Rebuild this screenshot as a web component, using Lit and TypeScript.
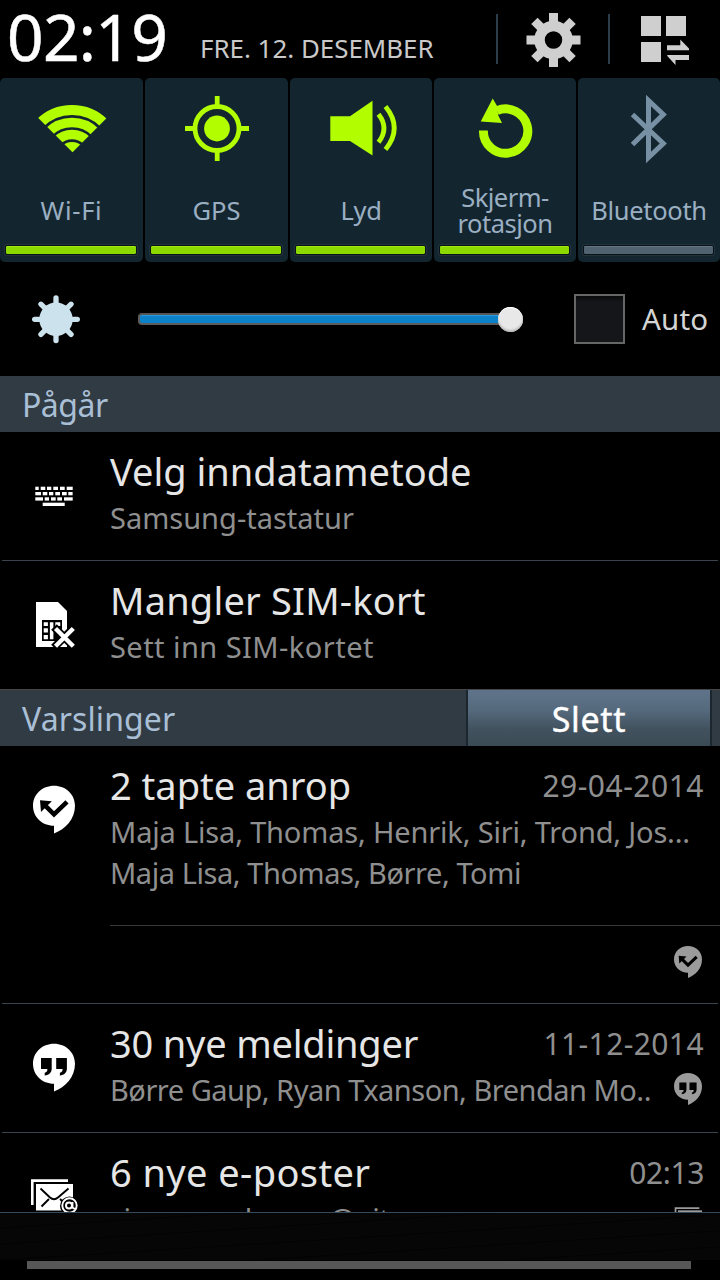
import { LitElement, html, svg, css, nothing } from "lit";
import { customElement, property } from "lit/decorators.js";

const bubble = svg`<path d="M54 39.7c-11.800 0-21 8.700-21 20s9.200 20 21 20v7.800c11.500-4.500 21-14.500 21-27.800 0-11.300-9.200-20-21-20z" fill="currentColor"/>`;

const glyphs: Record<string, unknown> = {
  keyboard: svg`<g fill="#fff">
    ${[
      [54.7, [[35.3, 3.4], [40.7, 4.600], [47, 4.300], [53.3, 4.700], [60, 4.700], [66.700, 6]]],
      [60, [[35.3, 5.700], [42.7, 4.600], [49, 4.300], [55.3, 4.700], [62, 4.700], [68.3, 4.300]]],
      [65.3, [[35.3, 7.700], [44.7, 4.300], [51, 4.700], [57.3, 4.700], [64, 8.700]]],
      [70.7, [[42.7, 22]]],
    ].map(([y, keys]: any) => keys.map(([x, w]: number[]) => svg`<rect x=${x} y=${y} width=${w} height="3.300"/>`))}
  </g>`,
  sim: svg`<path d="M36 41h22l9 9v36H36z" fill="#fff"/>
    <rect x="42" y="59" width="20" height="21" fill="#000"/>
    <path d="M43.700 61.300h4.200v3.700h-4.200zM43.700 67.200h4.200v4.400h-4.200zM43.700 74h4.200v4.200h-4.200zM49.900 61.300h3.500v16.900h-3.500zM55.300 61.300h5v3.700h-5zM55.300 67.200h5v4.400h-5z" fill="#fff"/>
    <path d="M54 66 74.500 86.500M74.500 66 54 86.500" stroke="#000" stroke-width="8"/>
    <path d="M55.500 67.500 73.300 85.300M73.300 67.500 55.500 85.300" stroke="#fff" stroke-width="4.400"/>`,
  missed: svg`${bubble}
    <path d="M67 55.800 54 68.300 44.500 58.800" fill="none" stroke="#000" stroke-width="4.600"/>
    <path d="M40 54.300 51.800 55.300 41 66z" fill="#000"/>`,
  quotes: svg`${bubble}
    <path d="M41 54h10.700v10.500c0 4-2.400 6.600-7 6.900v-2.700c2-.4 2.700-1.600 2.700-3.700H41zM56.200 54h10.700v10.500c0 4-2.400 6.600-7 6.900v-2.700c2-.4 2.700-1.600 2.700-3.700h-6.400z" fill="#000"/>`,
  mail: svg`<path d="M32.300 72V47.600H68" fill="none" stroke="currentColor" stroke-width="2.600"/>
    <rect x="36" y="51" width="37" height="26.500" fill="currentColor"/>
    <path d="M40.500 55.500 50 64.500q4 3.500 8 0L68.500 55.500M41.500 73.500l7.500-7.500M60 66l3 3" fill="none" stroke="#000" stroke-width="1.900"/>
    <circle cx="69.500" cy="73" r="9.500" fill="#000"/>
    <circle cx="69.500" cy="72.500" r="7.200" fill="none" stroke="currentColor" stroke-width="1.900"/>
    <circle cx="69" cy="72.500" r="3" fill="none" stroke="currentColor" stroke-width="2"/>
    <path d="M72.500 69v5q.500 2 3 1.500" fill="none" stroke="currentColor" stroke-width="1.900"/>`,
};

const toggles = [
  {
    label: ["Wi-Fi"], on: true, gap: 0.7,
    icon: svg`<clipPath id="fan"><path d="M72.500 74.300 28 29.800V10h88v20.800z"/></clipPath>
      <g clip-path="url(#fan)" fill="none" stroke="#b2fe00">
        <circle cx="72" cy="78" r="46" stroke-width="10"/><circle cx="72" cy="78" r="33.500" stroke-width="9.600"/>
        <circle cx="72" cy="78" r="21.500" stroke-width="9.600"/><circle cx="72" cy="78" r="14" fill="#b2fe00" stroke="none"/></g>`,
  },
  {
    label: ["GPS"], on: true, gap: 0,
    icon: svg`<g fill="none" stroke="#b2fe00" stroke-width="4.800"><circle cx="72" cy="50.500" r="22"/>
      <path d="M40 50.500h9M95 50.500h9M72.200 18v9M72.200 74v9"/></g><circle cx="72" cy="50.500" r="12.900" fill="#b2fe00"/>`,
  },
  {
    label: ["Lyd"], on: true, gap: -0.4,
    icon: svg`<path d="M40.300 38.200H60L82.500 22.700v54.700L60 63H40.300z" fill="#b2fe00"/>
      <g fill="none" stroke="#b2fe00" stroke-width="4.800"><path d="M88.500 36.200q11 14 0 28M95.500 28.500q17.500 21.500 0 43"/></g>`,
  },
  {
    label: ["Skjerm-", "rotasjon"], on: true, gap: -0.5,
    icon: svg`<path d="M49.400 52.500A22.200 22.200 0 1 0 63 32.600" fill="none" stroke="#b2fe00" stroke-width="8.900"/>
      <path d="M58.700 20.500 46.700 43.400 68 45l-3.700-7.500-1.500-10z" fill="#b2fe00"/>`,
  },
  {
    label: ["Bluetooth"], on: false, gap: -0.3,
    icon: svg`<path d="M54.500 66.500 85.300 36.500 70.500 22.500V79.500L85.300 65.500 54.500 36.500" fill="none" stroke="#7890a3" stroke-width="5" stroke-miterlimit="10"/>`,
  },
];

interface Line { text: string; gap: number; }
interface Note {
  icon: string; title: Line; lines: Line[]; time?: Line; small?: string; count?: string; footer?: boolean;
}

const ongoing: Note[] = [
  { icon: "keyboard", title: { text: "Velg inndatametode", gap: 0 }, lines: [{ text: "Samsung-tastatur", gap: 0 }] },
  { icon: "sim", title: { text: "Mangler SIM-kort", gap: 0.2 }, lines: [{ text: "Sett inn SIM-kortet", gap: 0.45 }] },
];

const notices: Note[] = [
  {
    icon: "missed", title: { text: "2 tapte anrop", gap: 0 }, time: { text: "29-04-2014", gap: 0.5 }, footer: true,
    lines: [
      { text: "Maja Lisa, Thomas, Henrik, Siri, Trond, Jos...", gap: -0.17 },
      { text: "Maja Lisa, Thomas, Børre, Tomi", gap: -0.43 },
    ],
  },
  {
    icon: "quotes", title: { text: "30 nye meldinger", gap: -0.2 }, time: { text: "11-12-2014", gap: 0.4 }, small: "quotes",
    lines: [{ text: "Børre Gaup, Ryan Txanson, Brendan Mo..", gap: -0.5 }],
  },
  {
    icon: "mail", title: { text: "6 nye e-poster", gap: 0.4 }, time: { text: "02:13", gap: -0.4 }, small: "mail", count: "6",
    lines: [{ text: "sjur.n.moshagen@uit.no", gap: -0.4 }],
  },
];

@customElement("quick-toggle")
class QuickToggle extends LitElement {
  @property({ attribute: false }) item: any;
  static styles = css`
    :host { display: flex; flex-direction: column; height: 184px; background: #132630; border-radius: 5px; overflow: hidden; }
    svg { display: block; width: 144px; height: 106px; flex: none; }
    .label { height: 52px; display: flex; flex-direction: column; justify-content: center; text-align: center;
      font-size: 25.500px; line-height: 26px; color: #9bafc2; white-space: nowrap; }
    .bar { height: 8px; margin: 10px 7px 0 6px; background: #8cd900; outline: 1px solid #081218; box-shadow: inset 0 1px #a0ea10, 0 0 0 2px #22323b; border-radius: 1px; }
    .off { background: #50626f; box-shadow: inset 0 1px #657682, 0 0 0 2px #22323b; }
  `;
  render() {
    return html`<svg viewBox="0 0 144 106">${this.item.icon}</svg>
      <div class="label" style="letter-spacing:${this.item.gap}px">${this.item.label.map((t: string) => html`<span>${t}</span>`)}</div>
      <div class="bar ${this.item.on ? "" : "off"}"></div>`;
  }
}

@customElement("notice-row")
class NoticeRow extends LitElement {
  @property({ attribute: false }) note!: Note;
  static styles = css`
    :host { display: block; flex: none; }
    .row { display: flex; height: 128px; }
    .tall { height: 179px; }
    .icon { width: 110px; height: 128px; flex: none; color: #fff; }
    .body { flex: 1; min-width: 0; padding-top: 14px; }
    .head { display: flex; justify-content: space-between; height: 50px; padding-right: 16px; }
    .title { font-size: 38px; line-height: 50px; color: #e6e6e6; white-space: pre; }
    .time { font-size: 30px; line-height: 51px; color: #8f8f8f; }
    .sub { display: flex; justify-content: space-between; padding: 1px 18px 0 0; }
    .line { font-size: 29px; line-height: 41px; color: #8f8f8f; white-space: pre; }
    .aside { display: flex; color: #9b9b9b; gap: 16px; }
    .count { font-size: 25px; line-height: 48px; }
    .small { width: 28px; height: 32px; margin-top: 4px; }
    .small-mail { margin-top: 9px; }
    .footer { height: 78px; margin-left: 110px; border-top: 1px solid #383838; display: flex; justify-content: flex-end;
      padding-right: 18px; box-sizing: border-box; color: #9b9b9b; }
    .footer .small { margin-top: 20px; }
    .rule { height: 1px; margin: 0 2px; background: #3a4350; }
  `;
  render() {
    const n = this.note;
    const line = (l: Line, name: string) => html`<div class=${name} style="letter-spacing:${l.gap}px">${l.text}</div>`;
    return html`
      <div class="row ${n.footer ? "tall" : ""}">
        <svg class="icon" viewBox="0 0 110 128">${glyphs[n.icon]}</svg>
        <div class="body">
          <div class="head">${line(n.title, "title")}${n.time ? line(n.time, "time") : nothing}</div>
          <div class="sub">
            <div>${n.lines.map((l) => line(l, "line"))}</div>
            ${n.small
              ? html`<div class="aside">${n.count ? html`<span class="count">${n.count}</span>` : nothing}
                  ${n.small === "mail"
                    ? html`<svg class="small small-mail" viewBox="30 46 42 48">${glyphs.mail}</svg>`
                    : html`<svg class="small" viewBox="33 39.600 42 48">${glyphs[n.small]}</svg>`}</div>`
              : nothing}
          </div>
        </div>
      </div>
      ${n.footer ? html`<div class="footer"><svg class="small" viewBox="33 39.600 42 48">${glyphs.missed}</svg></div>` : nothing}
      <div class="rule"></div>`;
  }
}

@customElement("app-root")
class AppRoot extends LitElement {
  static styles = css`
    :host { display: flex; flex-direction: column; width: 720px; height: 1280px; overflow: hidden; background: #000;
      font-family: "Noto Sans", sans-serif; }
    .top { display: flex; height: 78px; flex: none; align-items: flex-start; }
    .clock { width: 193px; padding-left: 7px; font-size: 64px; line-height: 74px; letter-spacing: -.700px; color: #fff; -webkit-text-stroke: .500px #fff; white-space: nowrap; }
    .date { width: 290px; margin-top: 28px; font-size: 25.900px; line-height: 40px; color: #c9c9c9; white-space: nowrap; }
    .actions { width: 223px; height: 78px; flex: none; }
    .toggles { display: grid; grid-template-columns: 143px 143px 142px 142px 142px; gap: 2px; flex: none; }
    .brightness { height: 114px; display: flex; align-items: center; flex: none; }
    .sun { width: 138px; height: 114px; flex: none; }
    .slider { width: 386px; height: 26px; display: flex; align-items: center; flex: none; }
    .track { width: 366px; height: 8px; border: 2px solid #5c5c5c; border-right: 0; border-radius: 4px 0 0 4px; background: #0a81c8; border-top-color: #555; box-shadow: inset 0 1px #2b9ade; }
    .thumb { width: 25px; height: 25px; margin-left: -8px; border-radius: 50%; background: #e8e8e8; box-shadow: inset 0 -2px 2px #bbb, inset 0 1px #fff; flex: none; }
    .check { width: 47px; height: 46px; margin-left: 50px; border: 2px solid #666; background: linear-gradient(#08090a, #15161a 6px); flex: none; }
    .auto { margin-left: 17px; font-size: 29.500px; line-height: 40px; letter-spacing: .200px; color: #d4d4d4; }
    .section { display: flex; flex: none; height: 56px; background: #313b44; color: #a9bfd6; font-size: 32px; line-height: 56px; }
    .section span { padding-left: 22px; flex: 1; }
    .ongoing { letter-spacing: -.500px; line-height: 57px; }
    .notices { border-top: 1px solid #454545; margin-top: -1px; line-height: 58px; letter-spacing: .100px; }
    .clear { font: inherit; width: 246px; margin-right: 8px; padding: 0; border: 0; border-left: 2px solid #1c262e; border-right: 2px solid #1c262e;
      box-sizing: border-box; color: #fff; font-size: 34px; line-height: 58px; letter-spacing: .700px; -webkit-text-stroke: .400px #fff;
      background: linear-gradient(#5f738b, #566a7e 35%, #41525e 70%, #3b4b56); }
    .list { flex: 1; min-height: 0; overflow: hidden; display: flex; flex-direction: column; }
    .foot { height: 67px; flex: none; border-top: 1px solid #34495a; display: flex; flex-direction: column; }
    .grip { height: 47px; background: repeating-linear-gradient(176.400deg, #060606 0 14px, #020202 15px, #060606 16px); }
    .handle { height: 8px; margin: 1px 29px 0 27px; background: #575757; }
  `;
  render() {
    return html`
      <div class="top">
        <div class="clock">02:19</div>
        <div class="date">FRE. 12. DESEMBER</div>
        <svg class="actions" viewBox="0 0 223 78">
          <path d="M7 14v50M119 14v50" stroke="#2d3c4a" stroke-width="2"/>
          <g stroke="#cfcfcf"><circle cx="63.500" cy="40" r="14" fill="none" stroke-width="10.500"/>
            ${[0, 45, 90, 135].map((a) => svg`<path d="M63.500 13v12M63.500 55v12" stroke-width="9" transform="rotate(${a} 63.500 40)"/>`)}</g>
          <path d="M151 16h20v20h-20zM176 16h20v20h-20zM151 42h20v20h-20zM177 45.300h13.300v-5.800l8.700 9v1.800h-22zM199 55v5h-13.500v5L177.300 56v-1z" fill="#cfcfcf"/>
        </svg>
      </div>
      <div class="toggles">${toggles.map((t) => html`<quick-toggle .item=${t}></quick-toggle>`)}</div>
      <div class="brightness">
        <svg class="sun" viewBox="0 0 138 114">
          <circle cx="56" cy="57.300" r="16.700" fill="#cce3ed"/>
          ${[0, 45, 90, 135].map((a) => svg`<path d="M56 36v42.600" stroke="#cce3ed" stroke-width="5.300" stroke-linecap="round" transform="rotate(${a} 56 57.300)"/>`)}
        </svg>
        <div class="slider"><div class="track"></div><div class="thumb"></div></div>
        <div class="check"></div>
        <div class="auto">Auto</div>
      </div>
      <div class="section ongoing"><span>Pågår</span></div>
      ${ongoing.map((n) => html`<notice-row .note=${n}></notice-row>`)}
      <div class="section notices"><span>Varslinger</span><button class="clear">Slett</button></div>
      <div class="list">${notices.map((n) => html`<notice-row .note=${n}></notice-row>`)}</div>
      <div class="foot"><div class="grip"></div><div class="handle"></div></div>`;
  }
}
